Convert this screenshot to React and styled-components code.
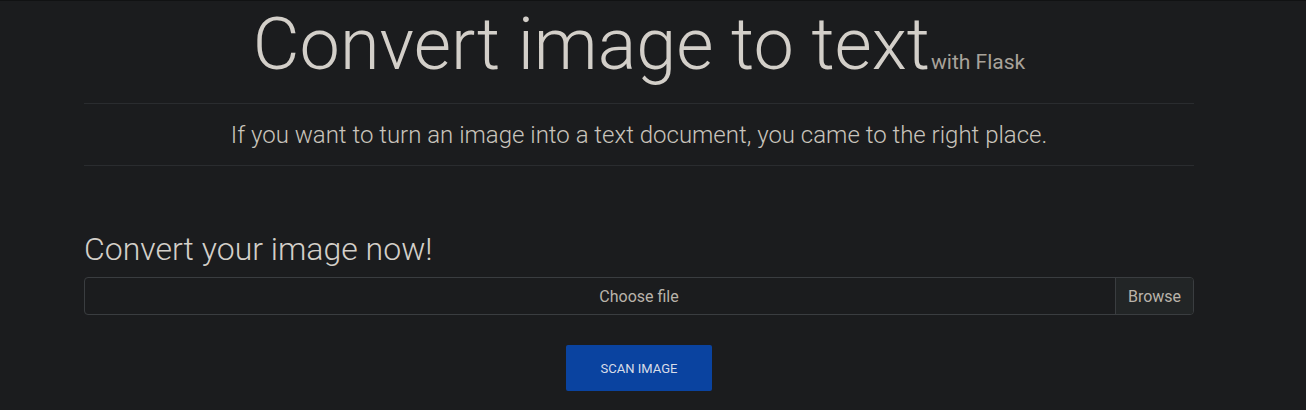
import styled, { createGlobalStyle } from "styled-components";

const GlobalStyle = createGlobalStyle`
	html, body {
		margin: 0;
		padding: 0;
		background: #1b1c1e;
	}

	body {
		font-family: Roboto, "Liberation Sans", sans-serif;
		color: #d3cfc9;
		border-top: 1px solid #111213;
	}
`;

const Container = styled.div`
	width: 1110px;
	margin-left: 84px;
`;

const Title = styled.h1`
	margin: 0;
	height: 102px;
	padding-top: 1px;
	box-sizing: border-box;
	text-align: center;
	font-size: 72px;
	font-weight: 300;
	line-height: 86px;
	color: #d3cfc9;

	small {
		font-size: 21px;
		font-weight: 400;
		line-height: 1;
		color: #a8a29a;
		margin-left: 1px;
	}
`;

const Rule = styled.hr`
	margin: 0;
	border: 0;
	border-top: 1px solid #2a2c2f;
`;

const Lead = styled.p`
	margin: 0;
	padding: 13px 0 12px;
	text-align: center;
	font-size: 24px;
	font-weight: 300;
	line-height: 36px;
	color: #c9c4bc;
`;

const SectionTitle = styled.h2`
	margin: 64px 0 0;
	font-size: 32px;
	font-weight: 300;
	line-height: 38px;
	color: #d3cfc9;
`;

const FileField = styled.label`
	display: flex;
	height: 38px;
	margin-top: 9px;
	border: 1px solid #3a3d40;
	border-radius: 4px;
	box-sizing: border-box;
	overflow: hidden;
	font-size: 16px;
	cursor: pointer;
`;

const FileName = styled.span`
	flex: 1;
	display: flex;
	align-items: center;
	justify-content: center;
	padding-left: 78px;
	color: #b9b3aa;
`;

const Browse = styled.span`
	display: flex;
	align-items: center;
	justify-content: center;
	width: 77px;
	background: #222526;
	border-left: 1px solid #3a3d40;
	color: #b9b3aa;
`;

const Actions = styled.div`
	display: flex;
	justify-content: center;
	margin-top: 30px;
`;

const ScanButton = styled.button`
	width: 146px;
	height: 46px;
	border: 0;
	border-radius: 2px;
	background: #0a43a0;
	color: #d8dde8;
	font-family: Roboto, "Liberation Sans", sans-serif;
	font-size: 13px;
	text-transform: uppercase;
	cursor: pointer;
`;

const App = () => {
	return (
		<>
			<GlobalStyle />
			<Container>
				<Title>
					Convert image to text<small>with Flask</small>
				</Title>
				<Rule />
				<Lead>
					If you want to turn an image into a text document, you came to the right place.
				</Lead>
				<Rule />
				<SectionTitle>Convert your image now!</SectionTitle>
				<FileField>
					<FileName>Choose file</FileName>
					<Browse>Browse</Browse>
				</FileField>
				<Actions>
					<ScanButton>Scan image</ScanButton>
				</Actions>
			</Container>
		</>
	);
};

export default App;
